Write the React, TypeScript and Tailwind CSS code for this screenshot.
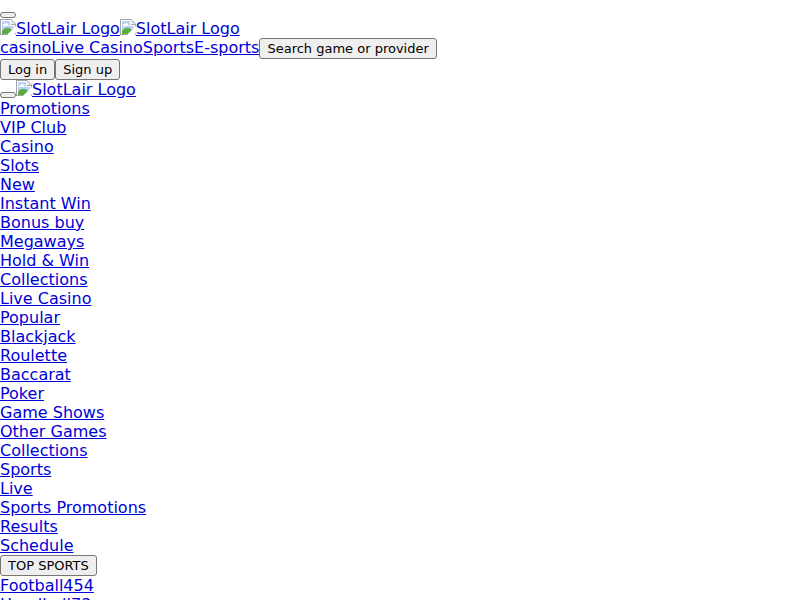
import type { ReactNode } from "react";

const menu = [
  "Promotions", "VIP Club", "Casino", "Slots", "New", "Instant Win", "Bonus buy",
  "Megaways", "Hold & Win", "Collections", "Live Casino", "Popular", "Blackjack",
  "Roulette", "Baccarat", "Poker", "Game Shows", "Other Games", "Collections",
  "Sports", "Live", "Sports Promotions", "Results", "Schedule",
];

const sports = [
  { name: "Football", count: 454 },
  { name: "Handball", count: 73 },
];

function Link({ children }: { children: ReactNode }) {
  return <a href="#" className="text-[#0000d8] underline">{children}</a>;
}

function Button({ children }: { children: ReactNode }) {
  return (
    <button type="button" className="h-[21px] rounded-[3px] border border-[#767676] bg-[#efefef] px-[7px] text-[13px] leading-[19px] text-black">
      {children}
    </button>
  );
}

function MenuButton({ label }: { label: string }) {
  return (
    <button type="button" aria-label={label} className="mb-px h-1.5 w-4 rounded-[3px] border border-[#767676] bg-[#efefef]" />
  );
}

function Logo() {
  return (
    <a href="#" className="flex text-[#0000d8] underline">
      <svg width="16" height="16" viewBox="0 0 16 16" aria-hidden="true">
        <path d="M0 0h11l5 5v4l-7 7H0z" fill="#a3a3a3" />
        <path d="M1 1h10v5h4v3l-6 6H1z" fill="#fff" />
        <path d="M2 2h8v5h4v2l-5 5H2z" fill="#bdd0f6" />
        <path d="M3 7c0-2 1-2 2-2 1-2 3-1 3 1 1 0 1 1 1 1z" fill="#fff" />
        <path d="M2 14v-2c3-4 7-4 10-1l-4 4H2z" fill="#5aab42" />
        <path d="M11 1l4 4h-4z" fill="#e8e8e8" />
        <path d="M16 9v7h-2z" fill="#d0d0d0" />
        <path d="M16 7 7 16h6l3-3z" fill="#fff" />
      </svg>
      <span>SlotLair Logo</span>
    </a>
  );
}

export default function App() {
  return (
    <div className="bg-white font-['DejaVu_Sans',sans-serif] text-base leading-[19px]">
      <header>
        <div className="flex h-[19px] items-end"><MenuButton label="Open menu" /></div>
        <div className="flex"><Logo /><Logo /></div>
        <nav className="flex items-start">
          <Link>casino</Link>
          <Link>Live Casino</Link>
          <Link>Sports</Link>
          <Link>E-sports</Link>
          <Button>Search game or provider</Button>
        </nav>
        <div className="flex"><Button>Log in</Button><Button>Sign up</Button></div>
      </header>
      <aside>
        <div className="flex items-end"><MenuButton label="Close menu" /><Logo /></div>
        <ul>
          {menu.map((item, i) => <li key={i}><Link>{item}</Link></li>)}
        </ul>
        <div className="flex"><Button>TOP SPORTS</Button></div>
        <ul>
          {sports.map(({ name, count }) => (
            <li key={name}><Link>{name}{count}</Link></li>
          ))}
        </ul>
      </aside>
    </div>
  );
}
